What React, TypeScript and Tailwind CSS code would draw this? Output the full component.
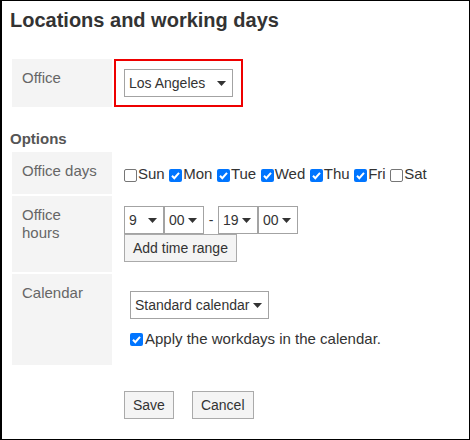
import React from 'react';

function Caret() {
  return (
    <svg width="9" height="5" viewBox="0 0 9 5" className="shrink-0">
      <polygon points="0,0 9,0 4.5,5" fill="#333" />
    </svg>
  );
}

function Select({ text, className }: { text: string; className: string }) {
  return (
    <div className={`flex h-[28px] items-center justify-between border border-[#a3a3a3] bg-white pl-[4px] pr-[6px] text-[14px] leading-[18px] ${className}`}>
      <span>{text}</span>
      <Caret />
    </div>
  );
}

function Checkbox({ checked }: { checked: boolean }) {
  if (!checked) {
    return <span className="block h-[13px] w-[13px] shrink-0 rounded-[2px] border border-[#767676] bg-white" />;
  }
  return (
    <span className="flex h-[13px] w-[13px] shrink-0 items-center justify-center rounded-[2px] bg-[#0075ff]">
      <svg width="13" height="13" viewBox="0 0 13 13">
        <path d="M3 6.8 L5.3 9.2 L10 3.8" fill="none" stroke="white" strokeWidth="2" />
      </svg>
    </span>
  );
}

function Label({ children }: { children: React.ReactNode }) {
  return (
    <div className="bg-[#f4f4f4] pl-[10px] pr-[10px] pt-[10px] text-[15px] leading-[18px] text-[#666]">
      {children}
    </div>
  );
}

const days = [
  { name: 'Sun', on: false },
  { name: 'Mon', on: true },
  { name: 'Tue', on: true },
  { name: 'Wed', on: true },
  { name: 'Thu', on: true },
  { name: 'Fri', on: true },
  { name: 'Sat', on: false },
];

export default function App() {
  return (
    <div className="h-[440px] w-[470px] border-b border-l-2 border-r border-t border-black bg-white pl-[8px] pt-[7px] font-['Liberation_Sans',Arial,sans-serif] text-[#333]">
      <h1 className="text-[20px] font-bold leading-[24px]">Locations and working days</h1>

      {/* office */}
      <div className="ml-[2px] mt-[27px] grid grid-cols-[100px_1fr] gap-x-[2px]">
        <Label>Office</Label>
        <div className="flex">
          <div className="border-2 border-[#ee0000] p-[8px]">
            <Select text="Los Angeles" className="w-[109px]" />
          </div>
        </div>
      </div>

      <h2 className="mt-[23px] text-[15px] font-bold leading-[18px] text-[#555]">Options</h2>

      <div className="ml-[2px] mr-[10px] mt-[4px] grid grid-cols-[100px_1fr] gap-[2px]">
        <Label>Office days</Label>
        <div className="flex items-center gap-[4.5px] pb-[11px] pl-[10px] pt-[13px] text-[15px] leading-[18px]">
          {days.map((d) => (
            <span key={d.name} className="flex items-center">
              <span className="mr-[1px] mt-[2px]">
                <Checkbox checked={d.on} />
              </span>
              {d.name}
            </span>
          ))}
        </div>

        <Label>Office hours</Label>
        <div className="flex flex-col items-start pb-[10px] pl-[10px] pt-[10px]">
          <div className="flex items-center">
            <Select text="9" className="w-[40px]" />
            <Select text="00" className="w-[40px]" />
            <span className="w-[14px] text-center text-[14px]">-</span>
            <Select text="19" className="w-[40px]" />
            <Select text="00" className="w-[40px]" />
          </div>
          <button className="h-[28px] border border-[#aaa] bg-[#f4f4f4] px-[8px] text-[14px] leading-[18px]">
            Add time range
          </button>
        </div>

        <Label>Calendar</Label>
        <div className="flex flex-col items-start pb-[17px] pl-[16px] pt-[17px]">
          <Select text="Standard calendar" className="w-[139px]" />
          <div className="mt-[11px] flex items-center text-[15px] leading-[18px]">
            <span className="mr-[2px] mt-[1px]">
              <Checkbox checked />
            </span>
            Apply the workdays in the calendar.
          </div>
        </div>
      </div>

      <div className="ml-[114px] mt-[26px] flex gap-[18px]">
        <button className="h-[28px] border border-[#aaa] bg-[#f4f4f4] px-[8px] text-[14px] leading-[18px]">Save</button>
        <button className="h-[28px] border border-[#aaa] bg-[#f4f4f4] px-[8px] text-[14px] leading-[18px]">Cancel</button>
      </div>
    </div>
  );
}
